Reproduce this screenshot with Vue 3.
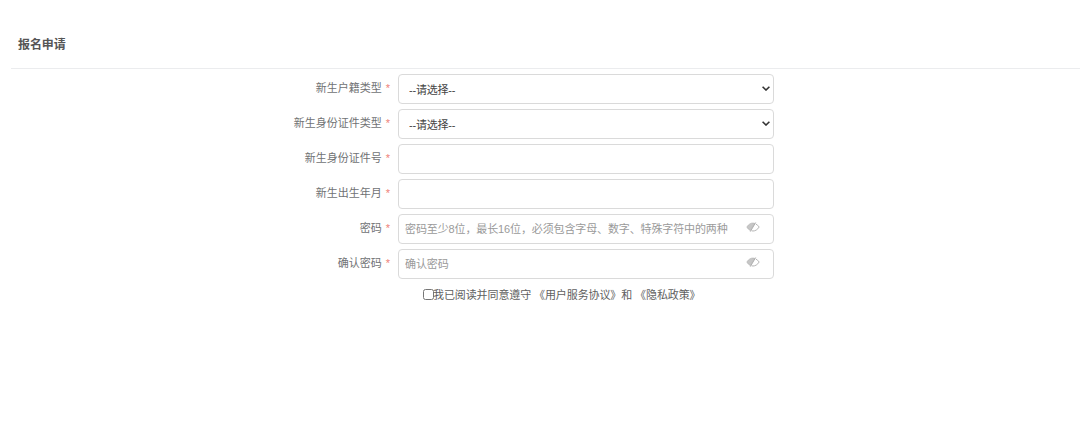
<script setup>
const rows = [
  { label: '新生户籍类型', type: 'select' },
  { label: '新生身份证件类型', type: 'select' },
  { label: '新生身份证件号', type: 'text' },
  { label: '新生出生年月', type: 'text' },
  { label: '密码', type: 'password', placeholder: '密码至少8位，最长16位，必须包含字母、数字、特殊字符中的两种' },
  { label: '确认密码', type: 'password', placeholder: '确认密码' },
]
</script>

<template>
  <div class="page">
    <header class="head"><h1 class="title">报名申请</h1></header>
    <form class="form">
      <div v-for="row in rows" :key="row.label" class="row">
        <label class="label">{{ row.label }}<span class="star">*</span></label>
        <div class="field">
          <template v-if="row.type === 'select'">
            <select class="control select">
              <option>--请选择--</option>
            </select>
            <svg class="chevron" viewBox="0 0 8 5" width="8" height="5" fill="none" stroke="#333" stroke-width="1.6">
              <path d="M.6.7 4 4 7.4.7" />
            </svg>
          </template>
          <template v-else-if="row.type === 'password'">
            <input class="control input" type="password" :placeholder="row.placeholder" />
            <svg class="eye" viewBox="0 0 14 10" width="14" height="10" fill="none">
              <path d="M.8 5C2.600 2.200 4.800 1 7 1c.6 0 1.200.1 1.800.3L4.400 8.500C3 7.900 1.800 6.700.8 5Z" fill="#c6c6c6" stroke="#b0b0b0" stroke-width=".6" />
              <path d="M9.800 2c1.300.7 2.400 1.600 3.400 3-1.800 2.800-4 4-6.200 4-.5 0-1-.1-1.400-.2" stroke="#b5b5b5" stroke-width="1" />
              <path d="M4.300 9.600 9.700.5" stroke="#a8a8a8" stroke-width=".9" />
            </svg>
          </template>
          <input v-else class="control input" type="text" />
        </div>
      </div>
      <div class="agree">
        <input id="agree" class="check" type="checkbox" />
        <label class="agree-text" for="agree">我已阅读并同意遵守 《用户服务协议》和 《隐私政策》</label>
      </div>
    </form>
  </div>
</template>

<style>
html, body { background: #fff; }
</style>

<style scoped>
.page {
  width: 1080px;
  height: 430px;
  overflow: hidden;
  background: #fff;
  font-family: "Liberation Sans", "Noto Sans CJK SC", sans-serif;
  font-size: 11px;
  color: #707274;
}
.head {
  margin-left: 11px;
  height: 69px;
  padding: 38px 0 0 7px;
  box-sizing: border-box;
  border-bottom: 1px solid #ebecee;
}
.title {
  margin: 0;
  font-size: 12px;
  line-height: 14px;
  font-weight: 700;
  letter-spacing: -0.1px;
  color: #555;
}
.form {
  padding-top: 5px;
  display: flex;
  flex-direction: column;
  gap: 5px;
}
.row {
  display: grid;
  grid-template-columns: 390px 376px;
  column-gap: 8px;
  height: 30px;
}
.label {
  text-align: right;
  line-height: 28px;
  color: #707274;
}
.star {
  margin-left: 4px;
  color: #ef7f78;
}
.field {
  position: relative;
  height: 30px;
}
.control {
  display: block;
  width: 100%;
  height: 30px;
  box-sizing: border-box;
  border: 1px solid #dadada;
  border-radius: 4px;
  background: #fff;
  font-family: inherit;
  font-size: 11px;
  outline: none;
}
.select {
  appearance: none;
  padding: 2px 0 0 10px;
  letter-spacing: -0.2px;
  color: #444;
}
.chevron {
  position: absolute;
  top: 12px;
  right: 4px;
  pointer-events: none;
}
.input {
  padding: 0 40px 0 6px;
  letter-spacing: -0.12px;
  color: #333;
}
.input::placeholder {
  color: #9a9a9a;
  opacity: 1;
}
.eye {
  position: absolute;
  top: 8px;
  right: 14px;
}
.agree {
  display: flex;
  align-items: center;
  margin-left: 423px;
  height: 20px;
  letter-spacing: -0.1px;
  color: #606060;
}
.check {
  width: 11px;
  height: 11px;
  margin: 0;
}
.agree-text {
  margin-left: -1px;
}
</style>
